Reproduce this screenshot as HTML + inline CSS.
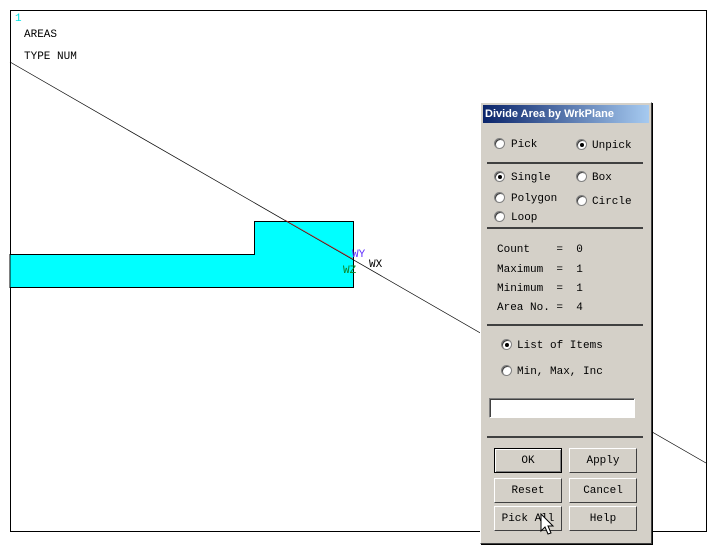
<!DOCTYPE html>
<html><head><meta charset="utf-8"><style>
*{margin:0;padding:0;box-sizing:border-box}
body{width:720px;height:546px;background:#fff;position:relative;overflow:hidden;font-family:"Liberation Mono",monospace;font-size:11px;color:#000}
.abs{position:absolute}
.dlg{left:480px;top:102px;width:172px;height:442px;background:#d4d0c8;border:1px solid #fff;border-right-color:#404040;border-bottom-color:#404040;box-shadow:1px 1px 0 #000}
.title{left:2px;top:2px;width:166px;height:18px;background:linear-gradient(90deg,#0a246a,#a6caf0);color:#fff;font:bold 11px "Liberation Sans",sans-serif;line-height:18px;padding-left:2px}
.rad{width:11px;height:11px;border-radius:50%;background:#fff;border:1px solid #808080;box-shadow:inset 1px 1px 0 #404040}
.rad.on::after{content:"";position:absolute;left:3px;top:3px;width:4px;height:4px;border-radius:50%;background:#000}
.hr{left:6px;width:156px;height:2px;background:#404040}
.btn{width:68px;height:25px;border:1px solid #fff;border-right-color:#404040;border-bottom-color:#404040;text-align:center;line-height:24px;font-size:11px}
.lbl{font-size:11px;margin-top:1px}
</style></head><body>
<svg class="abs" style="left:0;top:0" width="720" height="546">
<rect x="10.5" y="10.5" width="696" height="521" fill="none" stroke="#000"/>
<path d="M10 254.5H254.5V221.5H353.5V287.5H10Z" fill="#00ffff" stroke="#000"/>
<line x1="10" y1="62" x2="706" y2="463" stroke="#000" stroke-width="0.7"/>
<line x1="285" y1="220" x2="353" y2="259" stroke="#e03030" stroke-width="0.7"/>
<text x="352" y="257" fill="#6030ff" font-family="Liberation Mono" font-size="11">WY</text>
<text x="369" y="267" fill="#000" font-family="Liberation Mono" font-size="11">WX</text>
<text x="343" y="273" fill="#108020" font-family="Liberation Mono" font-size="11">WZ</text>
<text x="15" y="21" fill="#00e0e0" font-family="Liberation Mono" font-size="11">1</text>
<text x="24" y="37" font-family="Liberation Mono" font-size="11">AREAS</text>
<text x="24" y="59" font-family="Liberation Mono" font-size="11">TYPE NUM</text>
</svg>
<div class="abs dlg">
<div class="abs title">Divide Area by WrkPlane</div>
<div class="abs rad" style="left:13px;top:35px"></div><div class="abs lbl" style="left:30px;top:35px">Pick</div>
<div class="abs rad on" style="left:95px;top:36px"></div><div class="abs lbl" style="left:111px;top:36px">Unpick</div>
<div class="abs hr" style="top:59px"></div>
<div class="abs rad on" style="left:13px;top:68px"></div><div class="abs lbl" style="left:30px;top:68px">Single</div>
<div class="abs rad" style="left:95px;top:68px"></div><div class="abs lbl" style="left:111px;top:68px">Box</div>
<div class="abs rad" style="left:13px;top:89px"></div><div class="abs lbl" style="left:30px;top:89px">Polygon</div>
<div class="abs rad" style="left:95px;top:92px"></div><div class="abs lbl" style="left:111px;top:92px">Circle</div>
<div class="abs rad" style="left:13px;top:108px"></div><div class="abs lbl" style="left:30px;top:108px">Loop</div>
<div class="abs hr" style="top:124px"></div>
<div class="abs lbl" style="left:16px;top:140px;white-space:pre">Count    =  0</div>
<div class="abs lbl" style="left:16px;top:160px;white-space:pre">Maximum  =  1</div>
<div class="abs lbl" style="left:16px;top:179px;white-space:pre">Minimum  =  1</div>
<div class="abs lbl" style="left:16px;top:198px;white-space:pre">Area No. =  4</div>
<div class="abs hr" style="top:221px"></div>
<div class="abs rad on" style="left:20px;top:236px"></div><div class="abs lbl" style="left:36px;top:236px">List of Items</div>
<div class="abs rad" style="left:20px;top:262px"></div><div class="abs lbl" style="left:36px;top:262px">Min, Max, Inc</div>
<div class="abs" style="left:8px;top:295px;width:146px;height:20px;background:#fff;border:1px solid #808080;border-right-color:#fff;border-bottom-color:#fff;box-shadow:inset 1px 1px 0 #404040"></div>
<div class="abs hr" style="top:333px"></div>
<div class="abs btn" style="left:13px;top:345px;border:1px solid #000;box-shadow:inset 1px 1px 0 #fff,inset -1px -1px 0 #808080">OK</div>
<div class="abs btn" style="left:88px;top:345px">Apply</div>
<div class="abs btn" style="left:13px;top:375px">Reset</div>
<div class="abs btn" style="left:88px;top:375px">Cancel</div>
<div class="abs btn" style="left:13px;top:403px">Pick All</div>
<div class="abs btn" style="left:88px;top:403px">Help</div>
</div>
<svg class="abs" style="left:540px;top:513px" width="16" height="24"><path d="M1 1V18L5 14L8 21L11 20L8 13H13Z" fill="#fff" stroke="#000"/></svg>
</body></html>
